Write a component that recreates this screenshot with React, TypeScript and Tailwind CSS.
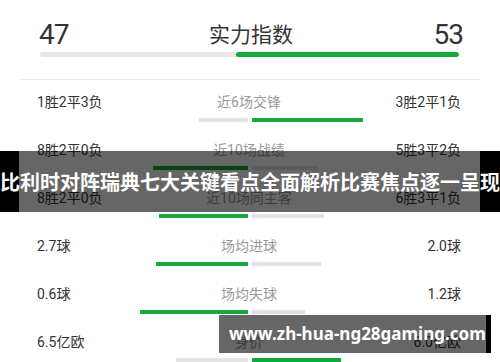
import React from 'react';

type StatRow = {
  left: string;
  label: string;
  right: string;
  leftBar: number;
  rightBar: number;
  leftGreen: boolean;
};

const rows: StatRow[] = [
  { left: '1胜2平3负', label: '近6场交锋', right: '3胜2平1负', leftBar: 49, rightBar: 111, leftGreen: false },
  { left: '8胜2平0负', label: '近10场战绩', right: '5胜3平2负', leftBar: 95, rightBar: 66, leftGreen: true },
  { left: '8胜2平0负', label: '近10场同主客', right: '6胜3平1负', leftBar: 89, rightBar: 72, leftGreen: true },
  { left: '2.7球', label: '场均进球', right: '2.0球', leftBar: 92, rightBar: 69, leftGreen: true },
  { left: '0.6球', label: '场均失球', right: '1.2球', leftBar: 108, rightBar: 53, leftGreen: true },
  { left: '6.5亿欧', label: '身价', right: '6.0亿欧', leftBar: 72, rightBar: 89, leftGreen: false },
];

const font = { fontFamily: 'Roboto, "Noto Sans CJK SC", sans-serif' };

const Row: React.FC<{ row: StatRow }> = ({ row }) => (
  <div className="flex h-[48px] flex-col pt-[12px]">
    <div className="grid h-[20px] grid-cols-[1fr_auto_1fr] items-center pl-[37px] pr-[39px] text-[14px] leading-[20px]">
      <div className="text-[#333]">{row.left}</div>
      <div className="text-[#999]">{row.label}</div>
      <div className="text-right text-[#333]">{row.right}</div>
    </div>
    <div className="mt-[6px] flex h-[4px]">
      <div className="flex flex-1 justify-end pr-[1px]">
        <div
          className={row.leftGreen ? 'h-full bg-[#15a83b]' : 'h-full bg-[#e3e3e3]'}
          style={{ width: row.leftBar }}
        />
      </div>
      <div className="flex flex-1 pl-[3px]">
        <div
          className={row.leftGreen ? 'h-full bg-[#e3e3e3]' : 'h-full bg-[#15a83b]'}
          style={{ width: row.rightBar }}
        />
      </div>
    </div>
  </div>
);

export default function App() {
  return (
    <div className="relative h-[362px] w-[500px] overflow-hidden bg-white" style={font}>
      <div className="pt-[20px]">
        <div className="flex h-[30px] items-center justify-between pl-[39px] pr-[37px] text-[#333]">
          <span className="text-[28px] leading-[30px] tracking-[-1px]">47</span>
          <span className="text-[21px] leading-[30px]">实力指数</span>
          <span className="text-[28px] leading-[30px] tracking-[-1px]">53</span>
        </div>
        <div className="mx-[40px] mr-[41px] mt-[2px] flex h-[5px] overflow-hidden rounded-full bg-[#e6e6e6]">
          <div className="w-[196px]" />
          <div className="flex-1 rounded-full bg-[#15a83b]" />
        </div>
        <div className="mx-[19px] mt-[22px] h-px bg-[#eeeeee]" />
      </div>

      {rows.map((row, i) => (
        <Row key={i} row={row} />
      ))}

      {/* title banner */}
      <div className="absolute left-0 right-0 top-[151px] flex h-[61px]">
        <div className="w-[19px] bg-black" />
        <div className="flex-1 bg-black/60" />
        <div className="w-[20px] bg-black" />
        <div
          className="absolute inset-0 flex items-center justify-center whitespace-nowrap text-[20px] font-bold text-white"
          style={{ fontFamily: '"Noto Sans CJK SC", sans-serif' }}
        >
          比利时对阵瑞典七大关键看点全面解析比赛焦点逐一呈现
        </div>
      </div>

      {/* watermark */}
      <div className="absolute left-[219px] top-[315px] flex h-[38px] w-[272px]">
        <div className="flex flex-1 items-center bg-black/60 pl-[10px]">
          <span
            className="whitespace-nowrap text-[17px] font-bold text-white"
            style={{ fontFamily: '"Noto Sans", sans-serif' }}
          >
            www.zh-hua-ng28gaming.com
          </span>
        </div>
        <div className="w-[11px] bg-black" />
      </div>
    </div>
  );
}
